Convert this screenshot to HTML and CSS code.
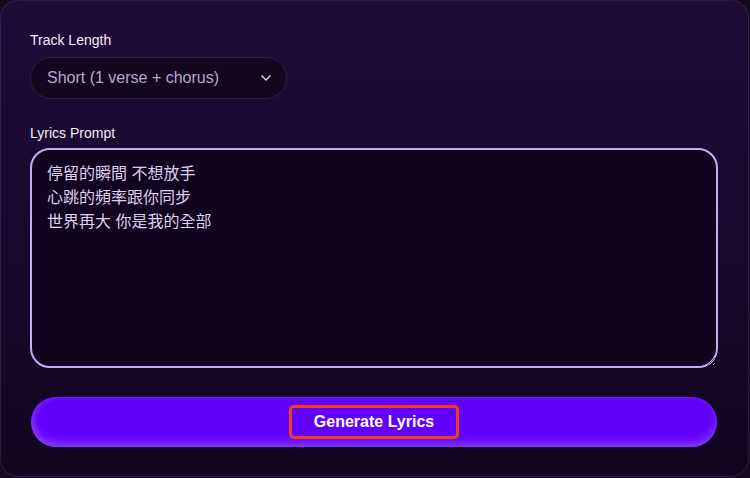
FILE: index.html
```
<!DOCTYPE html>
<html lang="zh-Hant">
<head>
<meta charset="utf-8">
<title>Lyrics Generator</title>
<link rel="stylesheet" href="styles.css">
</head>
<body>
<div class="card">
  <div class="field">
    <label class="label">Track Length</label>
    <div class="select">
      <span class="select-text">Short (1 verse + chorus)</span>
      <svg class="chevron" width="12" height="8" viewBox="0 0 12 8"><path d="M1.5 1.5 L6 6 L10.5 1.5" fill="none" stroke="#e6ddf2" stroke-width="1.3"/></svg>
    </div>
  </div>
  <div class="field field-prompt">
    <label class="label">Lyrics Prompt</label>
    <textarea class="prompt">停留的瞬間 不想放手
心跳的頻率跟你同步
世界再大 你是我的全部</textarea>
  </div>
  <button class="generate"><span class="generate-text">Generate Lyrics</span></button>
</div>
</body>
</html>
```
FILE: styles.css
```
html, body {
  margin: 0;
  padding: 0;
  background: #140b1e;
}
body {
  width: 750px;
  height: 478px;
  overflow: hidden;
  font-family: "Liberation Sans", Arial, sans-serif;
}
.card {
  box-sizing: border-box;
  width: 749px;
  height: 477px;
  border: 1px solid rgba(120, 90, 160, 0.25);
  border-radius: 18px;
  background: linear-gradient(180deg, #200b36 0%, #1b0930 40%, #12051f 100%);
  padding: 31px 29px 0 29px;
  display: flex;
  flex-direction: column;
}
.field {
  display: flex;
  flex-direction: column;
}
.label {
  font-size: 14px;
  line-height: 16px;
  color: #f3ecfb;
  margin-bottom: 9px;
}
.select {
  box-sizing: border-box;
  width: 257px;
  height: 42px;
  border: 1.5px solid #2c1f3f;
  border-radius: 21px;
  background: #14061f;
  display: flex;
  align-items: center;
  justify-content: space-between;
  padding: 0 14px 0 16px;
}
.select-text {
  font-size: 16px;
  color: #b7a6cc;
}
.chevron {
  display: block;
}
.field-prompt {
  margin-top: 26px;
}
.field-prompt .label {
  margin-bottom: 7px;
}
.prompt {
  box-sizing: border-box;
  width: 688px;
  height: 220px;
  border: 2px solid #c9aaf3;
  border-radius: 20px;
  background: #12041f;
  color: #ddcff0;
  font-family: "Liberation Sans", "Noto Sans CJK TC", sans-serif;
  font-size: 16px;
  line-height: 24px;
  padding: 12px 15px;
  margin: 0;
  outline: none;
  resize: vertical;
}
.generate {
  margin-top: 29px;
  margin-left: 1px;
  width: 686px;
  height: 50px;
  border: none;
  border-radius: 25px;
  background: #6100fb;
  box-shadow: inset 0 -5px 8px rgba(170, 110, 255, 0.45), inset 3px 0 6px rgba(170, 110, 255, 0.3);
  display: flex;
  align-items: center;
  justify-content: center;
  padding: 0;
  cursor: pointer;
}
.generate-text {
  box-sizing: border-box;
  height: 34px;
  padding: 0 22px;
  border: 3px solid #ef3d1f;
  border-radius: 5px;
  display: flex;
  align-items: center;
  font-family: "Liberation Sans", Arial, sans-serif;
  font-weight: bold;
  font-size: 16px;
  color: #ffffff;
}
```
